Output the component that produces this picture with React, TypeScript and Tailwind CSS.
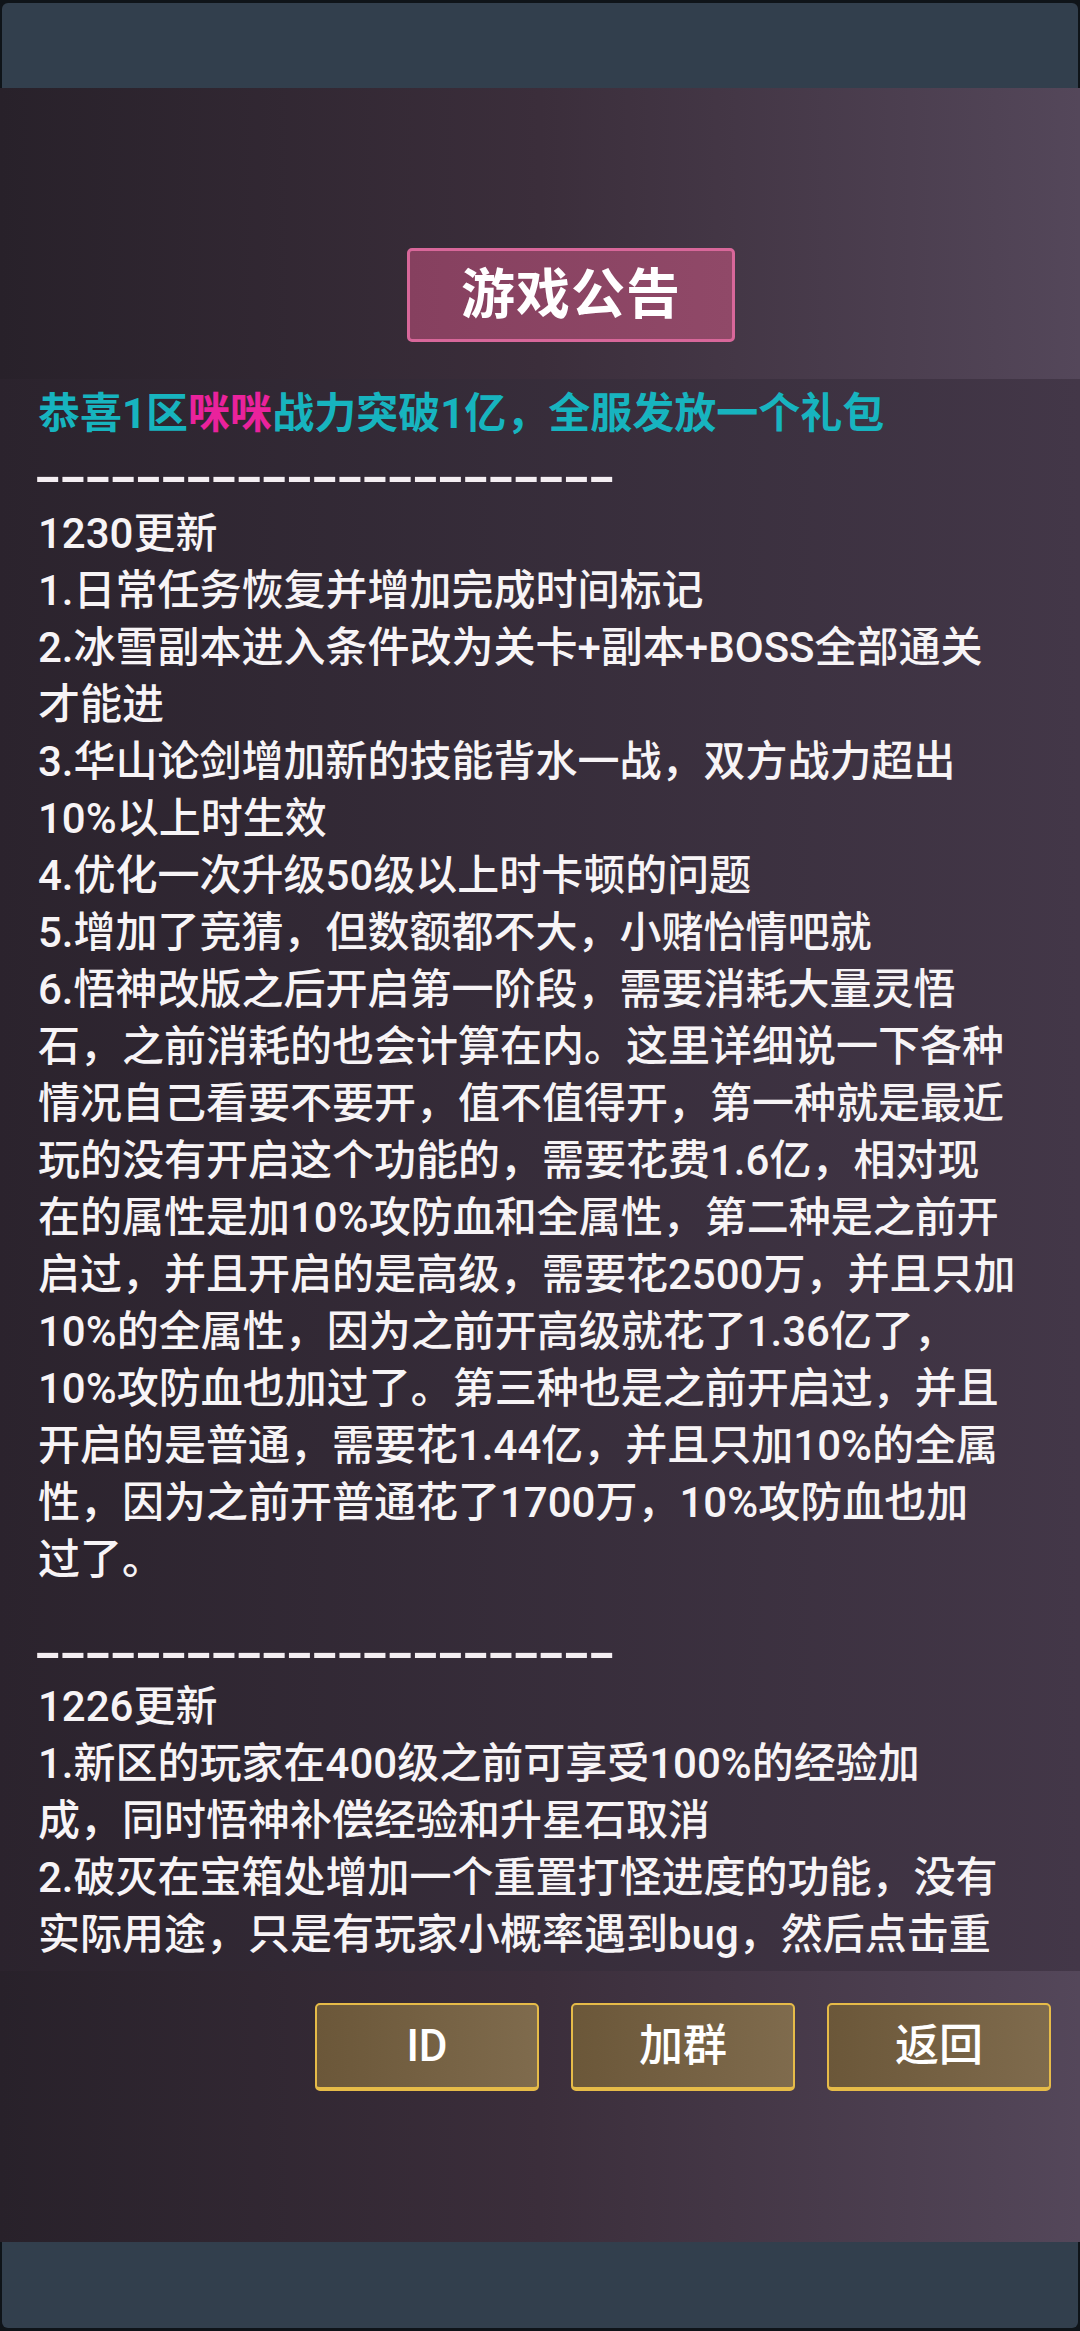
import React from "react";

const cjk = "font-['Roboto','Noto_Sans_CJK_SC',sans-serif]";

const lines1230 = [
  "1230更新",
  "1.日常任务恢复并增加完成时间标记",
  "2.冰雪副本进入条件改为关卡+副本+BOSS全部通关",
  "才能进",
  "3.华山论剑增加新的技能背水一战，双方战力超出",
  "10%以上时生效",
  "4.优化一次升级50级以上时卡顿的问题",
  "5.增加了竞猜，但数额都不大，小赌怡情吧就",
  "6.悟神改版之后开启第一阶段，需要消耗大量灵悟",
  "石，之前消耗的也会计算在内。这里详细说一下各种",
  "情况自己看要不要开，值不值得开，第一种就是最近",
  "玩的没有开启这个功能的，需要花费1.6亿，相对现",
  "在的属性是加10%攻防血和全属性，第二种是之前开",
  "启过，并且开启的是高级，需要花2500万，并且只加",
  "10%的全属性，因为之前开高级就花了1.36亿了，",
  "10%攻防血也加过了。第三种也是之前开启过，并且",
  "开启的是普通，需要花1.44亿，并且只加10%的全属",
  "性，因为之前开普通花了1700万，10%攻防血也加",
  "过了。",
];

const lines1226 = [
  "1226更新",
  "1.新区的玩家在400级之前可享受100%的经验加",
  "成，同时悟神补偿经验和升星石取消",
  "2.破灭在宝箱处增加一个重置打怪进度的功能，没有",
  "实际用途，只是有玩家小概率遇到bug，然后点击重",
];

// dashed separator, typed as hyphens like the game does
const Dashes = ({ className = "" }: { className?: string }) => (
  <div className={`h-[57px] whitespace-nowrap ${className}`}>
    <span className="inline-block origin-left scale-x-[1.96] -ml-[4px] font-['Liberation_Sans'] text-[42px] font-bold leading-[57px] tracking-[-1.14px] text-[#f4eef2]">
      -----------------------
    </span>
  </div>
);

const Line = ({ text }: { text: string }) => (
  <div className="h-[57px] whitespace-nowrap leading-[57px]">{text}</div>
);

const GoldButton = ({ label }: { label: string }) => (
  <button className="flex h-[88px] w-[224px] items-center justify-center rounded-[5px] border-2 border-b-4 border-[#e6bb48] bg-linear-to-r from-[#6b5739] to-[#7f6b4d] text-[44px] font-medium text-white">
    {label}
  </button>
);

export default function App() {
  return (
    <div className={`flex h-[2331px] w-[1080px] flex-col bg-[#0f1419] ${cjk}`}>
      {/* top bar */}
      <div className="mx-[2px] mt-[3px] h-[85px] rounded-t-[6px] bg-[#323f4d]" />

      {/* notice panel */}
      <div className="flex h-[2154px] flex-col bg-linear-to-r from-[#28212a] via-[#3b2e3b] to-[#54475a]">
        <div className="ml-[407px] mt-[160px] flex h-[94px] w-[328px] items-center justify-center rounded-[5px] border-[3px] border-[#d8679a] bg-linear-to-r from-[#86405f] to-[#904968] text-[54px] font-bold tracking-[1px] text-white">
          游戏公告
        </div>

        {/* scrolling text */}
        <div className="mt-[37px] h-[1592px] overflow-hidden bg-linear-to-r from-[#2b232d] to-[#433748] pl-[38px] pt-[6px] text-[42px] font-medium text-[#f7f4f6]">
          <div className="h-[57px] whitespace-nowrap font-bold leading-[57px] text-[#17b4bf]">
            恭喜1区<span className="text-[#ea229c]">咪咪</span>战力突破1亿，全服发放一个礼包
          </div>
          <Dashes className="mt-[3px]" />
          <div className="mt-[3px]">
            {lines1230.map((t, i) => (
              <Line key={i} text={t} />
            ))}
          </div>
          <Dashes className="mt-[33px]" />
          <div>
            {lines1226.map((t, i) => (
              <Line key={i} text={t} />
            ))}
          </div>
        </div>

        {/* bottom buttons */}
        <div className="mt-[32px] flex justify-end gap-[32px] pr-[29px]">
          <GoldButton label="ID" />
          <GoldButton label="加群" />
          <GoldButton label="返回" />
        </div>
      </div>

      {/* bottom bar */}
      <div className="mx-[2px] h-[86px] rounded-b-[6px] bg-[#323f4d]" />
    </div>
  );
}
